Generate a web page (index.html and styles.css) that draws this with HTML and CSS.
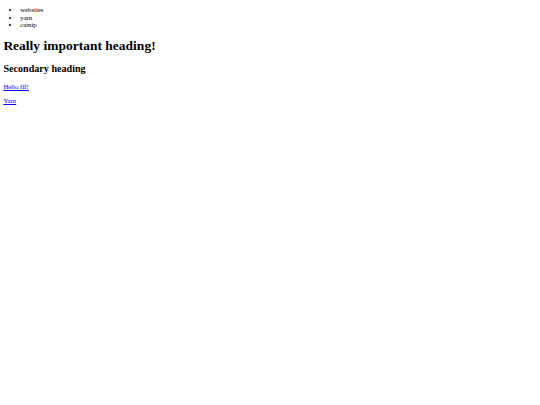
FILE: index.html
```html
<!DOCTYPE html>
<html lang="en">
<head>
<meta charset="utf-8">
<title>Page</title>
<link rel="stylesheet" href="styles.css">
</head>
<body class="page">
<ul class="list">
  <li class="item">websites</li>
  <li class="item">yarn</li>
  <li class="item">catnip</li>
</ul>
<h1 class="title">Really important heading!</h1>
<h2 class="subtitle">Secondary heading</h2>
<p class="para"><a class="link" href="#">Hello fff!</a></p>
<p class="para"><a class="link" href="#">Yarn</a></p>
</body>
</html>
```
FILE: styles.css
```css
html {
  background: #ffffff;
}
.page {
  margin: 0 3.375px;
  padding-top: 6.2px;
  font-family: "Liberation Serif", "Times New Roman", serif;
  font-size: 6.75px;
  line-height: 7.76px;
  color: #000000;
}
.list {
  margin: 0 0 6.75px;
  padding-left: 16.875px;
  list-style: disc;
}
.item {
  line-height: 7.6px;
}
.title {
  font-size: 13.5px;
  line-height: 15.5px;
  font-weight: bold;
  margin: 9.05px 0;
}
.subtitle {
  font-size: 10.125px;
  line-height: 11.64px;
  font-weight: bold;
  margin: 8.4px 0;
}
.para {
  margin: 6.75px 0;
}
.link {
  color: #0000ee;
  text-decoration: underline;
}
```
